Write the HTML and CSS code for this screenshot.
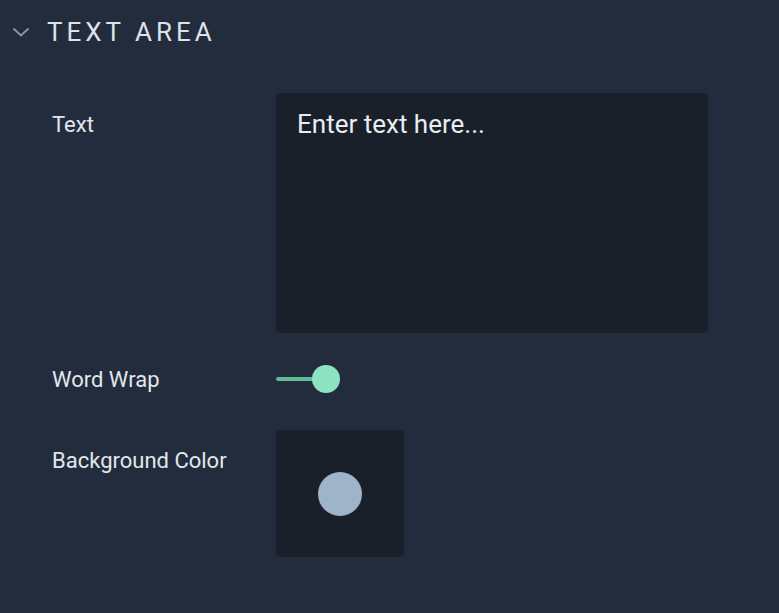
FILE: index.html
```html
<!DOCTYPE html>
<html>
<head>
<meta charset="utf-8">
<link rel="stylesheet" href="styles.css">
</head>
<body>
<section class="panel">
  <header class="panel-head">
    <svg class="chev" width="18" height="10" viewBox="0 0 18 10"><path d="M1.5 1.5 L9 8.5 L16.5 1.5" fill="none" stroke="#8a94a3" stroke-width="2"/></svg>
    <h2 class="title">TEXT AREA</h2>
  </header>
  <div class="rows">
    <div class="row">
      <div class="label label-top">Text</div>
      <div class="textarea"><span class="placeholder">Enter text here...</span></div>
    </div>
    <div class="row row-center">
      <div class="label">Word Wrap</div>
      <div class="toggle"><span class="track"></span><span class="knob"></span></div>
    </div>
    <div class="row">
      <div class="label label-top2">Background Color</div>
      <div class="swatch"><span class="dot"></span></div>
    </div>
  </div>
</section>
</body>
</html>
```
FILE: styles.css
```css
html, body {
  margin: 0;
  padding: 0;
  background: #222c3c;
  height: 100%;
}
body {
  font-family: Roboto, "Liberation Sans", sans-serif;
  color: #e4e9f0;
}
.panel-head {
  display: flex;
  align-items: center;
  height: 63px;
  padding-left: 12px;
}
.chev {
  display: block;
  margin-right: 17px;
  margin-top: 1px;
}
.title {
  margin: 0;
  font-weight: 400;
  font-size: 26px;
  letter-spacing: 4px;
  color: #dde3ea;
  line-height: 1;
}
.rows {
  display: flex;
  flex-direction: column;
  padding-left: 52px;
  padding-top: 30px;
}
.row {
  display: flex;
  align-items: flex-start;
}
.row-center {
  align-items: center;
  margin-top: 32px;
  height: 28px;
}
.row + .row:last-child {
  margin-top: 37px;
}
.label {
  width: 224px;
  font-size: 22px;
  line-height: 26px;
  color: #e2e7ee;
}
.row-center .label {
  padding-top: 2px;
}
.label-top {
  padding-top: 19px;
}
.label-top2 {
  padding-top: 18px;
}
.textarea {
  width: 432px;
  height: 240px;
  background: #1a202a;
  border-radius: 4px;
  box-sizing: border-box;
  padding: 15px 21px;
}
.placeholder {
  font-size: 26px;
  line-height: 32px;
  color: #e8edf3;
}
.toggle {
  position: relative;
  width: 64px;
  height: 28px;
}
.track {
  position: absolute;
  left: 0;
  top: 12px;
  width: 40px;
  height: 4px;
  border-radius: 2px;
  background: #5fbb97;
}
.knob {
  position: absolute;
  left: 36px;
  top: 0;
  width: 28px;
  height: 28px;
  border-radius: 50%;
  background: #8de2c1;
}
.swatch {
  width: 128px;
  height: 127px;
  background: #1a202a;
  border-radius: 4px;
  display: flex;
  align-items: center;
  justify-content: center;
}
.dot {
  width: 44px;
  height: 44px;
  border-radius: 50%;
  background: #9fb3c9;
}
```
